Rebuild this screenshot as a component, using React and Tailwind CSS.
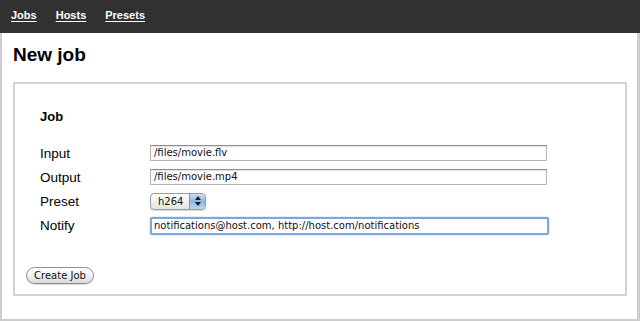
import React from "react";

const fields = [
  { label: "Input", value: "/files/movie.flv" },
  { label: "Output", value: "/files/movie.mp4" },
];

function TextField({ value, focused }) {
  return (
    <div
      className={
        focused
          ? "flex h-[18px] w-[399px] items-center rounded-[2px] border-2 border-[#7da7d9] bg-white px-[2px] shadow-[0_0_2px_#9cc2ee]"
          : "flex h-[16px] w-[397px] items-center border border-[#b5b5b5] border-t-[#8f8f8f] bg-white px-[3px] shadow-[inset_0_1px_1px_rgba(0,0,0,0.12)]"
      }
    >
      <span className="whitespace-nowrap font-['DejaVu_Sans',sans-serif] text-[10px] leading-none text-[#111]">
        {value}
      </span>
    </div>
  );
}

function PresetSelect() {
  return (
    <div className="flex h-[17px] w-[56px] items-stretch overflow-hidden rounded-[4px] border border-[#9a9a9a] bg-gradient-to-b from-white to-[#e4e4e4] shadow-[0_1px_1px_rgba(0,0,0,0.15)]">
      <span className="flex flex-1 items-center pl-[7px] font-['DejaVu_Sans',sans-serif] text-[10px] text-[#111]">
        h264
      </span>
      <span className="flex w-[16px] flex-col items-center justify-center gap-[2px] border-l border-[#6f95c8] bg-gradient-to-b from-[#c9dcf5] via-[#8fb5e6] to-[#bcd5f4]">
        <svg width="6" height="4" viewBox="0 0 6 4">
          <path d="M0 4 L3 0 L6 4 Z" fill="#1a1a1a" />
        </svg>
        <svg width="6" height="4" viewBox="0 0 6 4">
          <path d="M0 0 L3 4 L6 0 Z" fill="#1a1a1a" />
        </svg>
      </span>
    </div>
  );
}

export default function App() {
  return (
    <div className="flex h-[321px] w-[640px] flex-col bg-white font-['Liberation_Sans',Arial,sans-serif] text-black">
      {/* top nav */}
      <div className="flex h-[33px] items-center gap-[19px] bg-[#313131] pl-[11px] pb-[2px] text-[11px] font-bold text-white">
        <a className="underline underline-offset-[2px]">Jobs</a>
        <a className="underline underline-offset-[2px]">Hosts</a>
        <a className="underline underline-offset-[2px]">Presets</a>
      </div>

      {/* page */}
      <div className="flex flex-1 flex-col border-b-[2px] border-l-[2px] border-r-[3px] border-[#cdcdcd] pl-[11px] pr-[11px]">
        <h1 className="mt-[10px] text-[19px] font-bold leading-[23px]">New job</h1>

        <div className="mt-[16px] flex h-[214px] w-[614px] flex-col border-2 border-[#d2d2d2] pl-[25px]">
          <div className="mt-[23px] text-[13px] font-bold">Job</div>

          <div className="mt-[18px] grid grid-cols-[110px_1fr] items-center gap-y-[7px] text-[13.5px]">
            {fields.map((f) => (
              <React.Fragment key={f.label}>
                <span className="leading-[17px]">{f.label}</span>
                <TextField value={f.value} />
              </React.Fragment>
            ))}
            <span className="leading-[17px]">Preset</span>
            <PresetSelect />
            <span className="leading-[17px]">Notify</span>
            <TextField
              value="notifications@host.com, http://host.com/notifications"
              focused
            />
          </div>

          <button className="-ml-[14px] mt-[32px] flex h-[17px] w-[68px] items-center justify-center rounded-full border border-[#8e8e8e] bg-gradient-to-b from-white via-[#f2f2f2] to-[#d9d9d9] font-['DejaVu_Sans',sans-serif] text-[10px] text-[#111] shadow-[0_1px_1px_rgba(0,0,0,0.15)]">
            Create Job
          </button>
        </div>
      </div>
    </div>
  );
}
